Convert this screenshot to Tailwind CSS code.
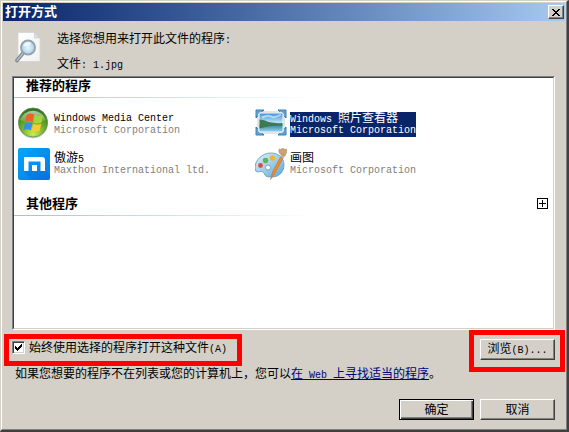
<!DOCTYPE html>
<html lang="zh-CN">
<head>
    <meta charset="UTF-8">
    <meta name="viewport" content="width=device-width, initial-scale=1.0">
    <title>打开方式</title>
    <script src="https://cdn.jsdelivr.net/npm/@tailwindcss/browser@4"></script>
</head>
<body class="bg-[#d4d0c8] font-['Liberation_Sans','Noto_Sans_CJK_SC',sans-serif] text-[12px] leading-[16px] text-black">
    <div class="flex min-h-screen flex-col border-t border-l border-r-2 border-b-2 border-t-[#d4d0c8] border-l-[#d4d0c8] border-r-[#404040] border-b-[#404040]">
        <div class="flex grow flex-col border border-t-white border-l-white border-r-[#808080] border-b-[#808080] p-px">
            <!-- 标题栏 -->
            <div class="flex h-[18px] items-center justify-between bg-linear-to-r from-[#0a246a] to-[#a6caf0] pr-px pl-[2px]">
                <h1 class="text-[13px] leading-[18px] font-bold text-white">打开方式</h1>
                <button type="button" aria-label="关闭" class="flex h-[14px] w-[16px] items-center justify-center border border-t-white border-l-white border-r-[#404040] border-b-[#404040] bg-[#d4d0c8] shadow-[inset_-1px_-1px_0_#808080]">
                    <svg class="h-[7px] w-[8px]" viewBox="0 0 8 7" shape-rendering="crispEdges"><path d="M0 0h2v1h1v1h2V1h1V0h2v1H7v1H6v1H5v1h1v1h1v1h1v1H6V6H5V5H3v1H2v1H0V6h1V5h1V4h1V3H2V2H1V1H0z"/></svg>
                </button>
            </div>

            <div class="flex grow flex-col pr-[10px] pl-[9px]">
                <!-- 文件信息 -->
                <div class="flex h-[55px] pt-[10px]">
                    <svg class="ml-px h-[32px] w-[32px]" viewBox="0 0 32 32">
                        <defs>
                            <linearGradient id="page" x2="1" y2="1"><stop stop-color="#fff"/><stop offset="1" stop-color="#f0f1f2"/></linearGradient>
                            <radialGradient id="lens"><stop stop-color="#e6f7ff"/><stop offset="1" stop-color="#a4d2ee"/></radialGradient>
                        </defs>
                        <path d="M5 1.500h16.500l5.500 5.500v23.500H5z" fill="url(#page)" stroke="#d3d4d4" stroke-width=".8"/>
                        <path d="M21.500 1.500v5.500H27z" fill="#dcdee0" stroke="#c5c8ca" stroke-width=".6"/>
                        <path d="M10.500 21.500l-6.500 8" stroke="#7d848c" stroke-width="3.6" stroke-linecap="round"/>
                        <path d="M10.500 21.500l-6.500 8" stroke="#b9bfc6" stroke-width="1.4" stroke-linecap="round"/>
                        <circle cx="15" cy="16.500" r="7" fill="url(#lens)" stroke="#9aa3ac" stroke-width="2"/>
                        <path d="M10.500 15a4.500 4.500 0 0 1 8-2.500q-3 3.500-8 2.500z" fill="#fff" opacity=".7"/>
                    </svg>
                    <div class="ml-[12px] leading-[24px]">
                        <p class="-mt-[4px]">选择您想用来打开此文件的程序<span class="font-['Liberation_Mono',monospace] text-[10px]">:</span></p>
                        <p class="-mt-px">文件<span class="font-['Liberation_Mono',monospace] text-[10px]">: 1.jpg</span></p>
                    </div>
                </div>

                <!-- 程序列表 -->
                <div class="h-[254px] border border-t-[#808080] border-l-[#808080] border-r-white border-b-white">
                    <div class="h-full border border-t-[#404040] border-l-[#404040] border-r-[#d4d0c8] border-b-[#d4d0c8] bg-white">
                        <section class="h-[117px]">
                            <h2 class="h-[19px] pl-[12px] text-[13px] leading-[15px] font-bold">推荐的程序</h2>
                            <div class="h-px w-[300px] bg-linear-to-r from-[#90c4f2] to-white"></div>
                            <ul class="grid grid-cols-[237px_1fr] gap-y-[9px] pt-[9px] pl-[4px]">
                                <li class="flex h-[32px] gap-[4px]">
                                    <svg class="h-[32px] w-[32px] shrink-0" viewBox="0 0 32 32">
                                        <defs>
                                            <radialGradient id="orb" cx=".5" cy=".9" r=".9"><stop stop-color="#c9ef4c"/><stop offset=".5" stop-color="#6cad28"/><stop offset="1" stop-color="#2c6b22"/></radialGradient>
                                            <linearGradient id="shine" x2="0" y2="1"><stop stop-color="#fff" stop-opacity=".6"/><stop offset="1" stop-color="#fff" stop-opacity=".1"/></linearGradient>
                                        </defs>
                                        <circle cx="15" cy="16.500" r="15" fill="#c9cdc6"/>
                                        <circle cx="15" cy="15.500" r="14.500" fill="url(#orb)" stroke="#5c8c50" stroke-width=".8"/>
                                        <path d="M2 13a13.500 12.500 0 0 1 26 0q-13 5-26 0z" fill="url(#shine)"/>
                                        <path d="M8.500 8q4-2.500 7.500-.5l-1.500 7.500q-4-2-7.500 0z" fill="#f0602a"/>
                                        <path d="M17 8q4 2 8 0l-1.500 7.500q-4 2-8 0z" fill="#a2d63a"/>
                                        <path d="M6.800 16.200q4-2 7.500 0l-1.500 7q-4-2-7.500 0z" fill="#3a8de0"/>
                                        <path d="M15.200 16.700q4 2 8 0l-1.500 7q-4 2-8 0z" fill="#fcc934"/>
                                    </svg>
                                    <div class="font-['Liberation_Mono','Noto_Sans_CJK_SC',monospace] text-[10px] leading-[12px]">
                                        <p class="mt-[6px]">Windows Media Center</p>
                                        <p class="text-[#808080]">Microsoft Corporation</p>
                                    </div>
                                </li>
                                <li class="flex h-[32px] gap-[3px]">
                                    <svg class="h-[32px] w-[32px] shrink-0" viewBox="0 0 32 32">
                                        <defs>
                                            <linearGradient id="sky" x2="0" y2="1"><stop stop-color="#3f97dc"/><stop offset=".6" stop-color="#d5effb"/><stop offset="1" stop-color="#d5effb"/></linearGradient>
                                            <linearGradient id="lake" x2="0" y2="1"><stop stop-color="#2f7fae"/><stop offset="1" stop-color="#8fd0e8"/></linearGradient>
                                        </defs>
                                        <path d="M1 3h8L1 11zM31 3h-8l8 8zM1 28h8l-8-8zM31 28h-8l8-8z" fill="#5b9fd6" stroke="#2b6fa8" stroke-width=".9"/>
                                        <path d="M3 5h26v21H3z" fill="#fff" stroke="#a9b6bf" stroke-width=".7"/>
                                        <path d="M1.500 3.500h5l-5 5zM30.500 3.500h-5l5 5zM1.500 27.500h5l-5-5zM30.500 27.500h-5l5-5z" fill="#5b9fd6"/>
                                        <path d="M4.500 6.500h23v18h-23z" fill="url(#sky)"/>
                                        <path d="M4.500 17.500h23v7h-23z" fill="url(#lake)"/>
                                        <path d="M4.500 12.500q5 0 9 2.500 7 1.500 14 1v2.500q-12-.5-23 3z" fill="#3b7a52"/>
                                        <path d="M7 10.500q6-3 9-1t10-2" stroke="#fff" stroke-width="2" fill="none" opacity=".5"/>
                                    </svg>
                                    <div class="font-['Liberation_Mono','Noto_Sans_CJK_SC',monospace] text-[10px] leading-[12px]">
                                        <div class="mt-[5px] bg-[#0a246a] pt-px text-white">
                                            <p class="h-[12px]">Windows <span class="text-[12px]">照片查看器</span></p>
                                            <p>Microsoft Corporation</p>
                                        </div>
                                    </div>
                                </li>
                                <li class="flex h-[32px] gap-[4px]">
                                    <svg class="h-[32px] w-[32px] shrink-0" viewBox="0 0 32 32">
                                        <defs>
                                            <linearGradient id="mx" x2="1" y2="1"><stop stop-color="#00a6f8"/><stop offset="1" stop-color="#087ae8"/></linearGradient>
                                        </defs>
                                        <rect width="32" height="32" rx="2" fill="url(#mx)"/>
                                        <path d="M22 23h5l5 5v4H14l-8-9z" fill="#0669cf" opacity=".35"/>
                                        <path d="M6 9h18q3 0 3 3v11h-4.500V13.500H10.500V23H6zM14 17h5v6h-5z" fill="#fff"/>
                                    </svg>
                                    <div class="font-['Liberation_Mono','Noto_Sans_CJK_SC',monospace] text-[10px] leading-[12px]">
                                        <p class="mt-[5px] h-[12px] text-[12px]">傲游<span class="text-[10px]">5</span></p>
                                        <p class="text-[#808080]">Maxthon International ltd.</p>
                                    </div>
                                </li>
                                <li class="flex h-[32px] gap-[3px]">
                                    <svg class="h-[32px] w-[32px] shrink-0" viewBox="0 0 32 32">
                                        <defs>
                                            <linearGradient id="palette" x2="1" y2="1"><stop stop-color="#e0f3fc"/><stop offset="1" stop-color="#5ca9d8"/></linearGradient>
                                        </defs>
                                        <path d="M16 5C7 5 0 12 0 20q0 4 3 4c3-1 5-1 6 1 1 4 4 4 8 4 7 0 12-5 12-12S24 5 16 5zm-3 12a2.500 2.500 0 1 1 0 5 2.500 2.500 0 0 1 0-5z" fill="url(#palette)" fill-rule="evenodd" stroke="#6795b5" stroke-width=".8"/>
                                        <circle cx="5.500" cy="17.500" r="2.400" fill="#e0493d"/>
                                        <circle cx="10.500" cy="12.500" r="2.700" fill="#58b755"/>
                                        <circle cx="17.500" cy="10" r="2.700" fill="#efb52f"/>
                                        <path d="M25.500 9L18 23l-2.500 8.500L19.500 26l8.500-16z" fill="#f08a2c" stroke="#c06a22" stroke-width=".5"/>
                                        <path d="M25 8.500l3.500 2 1.500-3-3.500-2z" fill="#b5b5ae"/>
                                        <path d="M25 6q-2-2-1-5 2 1 4-1 1 2 4 1 0 4-2 7z" fill="#c9a472" stroke="#a07f52" stroke-width=".4"/>
                                    </svg>
                                    <div class="font-['Liberation_Mono','Noto_Sans_CJK_SC',monospace] text-[10px] leading-[12px]">
                                        <p class="mt-[5px] h-[12px] text-[12px]">画图</p>
                                        <p class="text-[#808080]">Microsoft Corporation</p>
                                    </div>
                                </li>
                            </ul>
                        </section>
                        <section>
                            <div class="flex h-[20px] items-start justify-between pr-[5px] pl-[12px]">
                                <h2 class="text-[13px] leading-[17px] font-bold">其他程序</h2>
                                <button type="button" aria-label="展开其他程序" class="mt-[3px] h-[11px] w-[11px]">
                                    <svg class="block h-[11px] w-[11px]" viewBox="0 0 11 11" shape-rendering="crispEdges"><path d="M.5.5h10v10H.5zM5.500 2v7M2 5.500h7" fill="none" stroke="#000"/></svg>
                                </button>
                            </div>
                            <div class="h-px w-[300px] bg-linear-to-r from-[#90c4f2] to-white"></div>
                        </section>
                    </div>
                </div>

                <!-- 选项 -->
                <div class="flex items-center justify-between pt-[9px]">
                    <div class="relative flex h-[21px] items-start pt-[2px]">
                        <span class="grid">
                            <input id="always" type="checkbox" checked class="peer col-start-1 row-start-1 h-[13px] w-[13px] appearance-none border border-t-[#808080] border-l-[#808080] border-r-white border-b-white bg-white shadow-[inset_1px_1px_0_#404040,inset_-1px_-1px_0_#d4d0c8]">
                            <svg class="pointer-events-none invisible col-start-1 row-start-1 h-[13px] w-[13px] peer-checked:visible" viewBox="0 0 13 13" shape-rendering="crispEdges"><path d="M3 5h1v1h1v1h1V6h1V5h1V4h1V3h1v3H9v1H8v1H7v1H6v1H5V9H4V8H3z"/></svg>
                        </span>
                        <label for="always" class="ml-[4px] leading-[15px]">始终使用选择的程序打开这种文件<span class="font-['Liberation_Mono',monospace] text-[10px]">(A)</span></label>
                        <div class="pointer-events-none absolute -top-[5px] -right-[15px] -bottom-[6px] -left-[8px] border-[5px] border-[#fe0000]"></div>
                    </div>
                    <div class="relative">
                        <button type="button" class="block h-[21px] w-[75px] border border-t-white border-l-white border-r-[#404040] border-b-[#404040] bg-[#d4d0c8] leading-[18px] shadow-[inset_-1px_-1px_0_#808080]">浏览<span class="font-['Liberation_Mono',monospace] text-[10px]">(B)...</span></button>
                        <div class="pointer-events-none absolute -top-[9px] -right-[10px] -bottom-[12px] -left-[11px] border-[5px] border-[#fe0000]"></div>
                    </div>
                </div>
                <p class="mt-[6px] ml-[3px]">如果您想要的程序不在列表或您的计算机上，您可以<a href="#" class="text-[#00007c] underline">在<span class="font-['Liberation_Mono',monospace] text-[10px]"> Web </span>上寻找适当的程序</a>。</p>

                <div class="mt-[15px] flex justify-end gap-[6px]">
                    <button type="button" class="h-[21px] w-[75px] border border-black bg-[#d4d0c8] leading-[18px] shadow-[inset_1px_1px_0_#fff,inset_-1px_-1px_0_#404040,inset_-2px_-2px_0_#808080]">确定</button>
                    <button type="button" class="h-[21px] w-[75px] border border-t-white border-l-white border-r-[#404040] border-b-[#404040] bg-[#d4d0c8] leading-[18px] shadow-[inset_-1px_-1px_0_#808080]">取消</button>
                </div>
            </div>
        </div>
    </div>
</body>
</html>
